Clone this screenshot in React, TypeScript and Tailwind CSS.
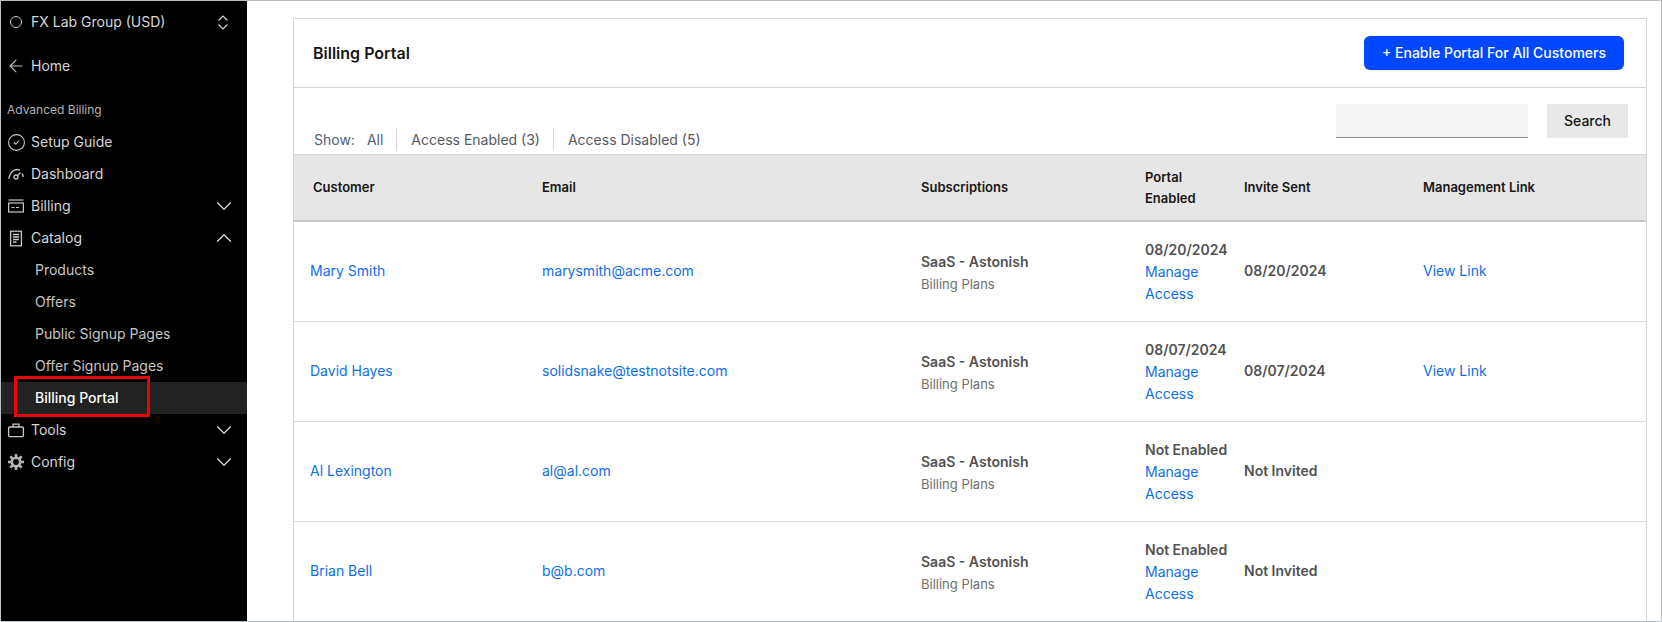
import { ArrowLeft, ChevronDown, ChevronUp, CircleCheck } from "lucide-react"
import type { ReactNode } from "react"

const font = "font-['Inter','Liberation_Sans',sans-serif]"

function ChevronsIcon() {
  return (
    <svg width="16" height="15" viewBox="0 0 16 15" fill="none" stroke="currentColor" strokeWidth="1.2">
      <path d="M3.500 5.500 8 1l4.500 4.500" />
      <path d="M3.500 9.500 8 14l4.500-4.500" />
    </svg>
  )
}

function GaugeIcon() {
  return (
    <svg width="18" height="16" viewBox="0 0 18 16" fill="none" stroke="currentColor" strokeWidth="1.3">
      <path d="M1.700 13C2.500 7.500 6 3.500 10 3.500c1 0 2 .2 3 .7" />
      <circle cx="9" cy="11" r="2" />
      <path d="m10.500 9.500 3-3" />
      <path d="M15 7.500c.6.8 1 2 1.300 3.500" />
    </svg>
  )
}

function BillingIcon() {
  return (
    <svg width="18" height="16" viewBox="0 0 18 16" fill="none" stroke="currentColor" strokeWidth="1.2">
      <path d="M1.500 2h15" />
      <rect x="1.600" y="5" width="14.800" height="9" />
      <path d="M4.500 9.500h3M9 9.500h3" />
    </svg>
  )
}

function CatalogIcon() {
  return (
    <svg width="14" height="17" viewBox="0 0 14 17" fill="none" stroke="currentColor" strokeWidth="1.3">
      <rect x="1.600" y="1.200" width="10.800" height="14.600" />
      <path d="M4 4.500h6M4 7h6M4 9.500h6M4 12h3.500" />
    </svg>
  )
}

function ToolsIcon() {
  return (
    <svg width="18" height="16" viewBox="0 0 18 16" fill="none" stroke="currentColor" strokeWidth="1.3">
      <rect x="1.600" y="5" width="14.800" height="9.600" rx="1" />
      <path d="M6 5V2.200h6V5" />
    </svg>
  )
}

function GearIcon() {
  return (
    <svg width="18" height="18" viewBox="0 0 18 18" fill="none" stroke="#b4b4b4">
      <circle cx="9" cy="9" r="4.200" strokeWidth="2.600" />
      <path
        d="M9 1v3M9 14v3M1 9h3M14 9h3M3.300 3.300l2.200 2.200M12.500 12.500l2.200 2.200M14.700 3.300l-2.200 2.200M5.500 12.500l-2.200 2.200"
        strokeWidth="2.600"
      />
    </svg>
  )
}

function NavRow({ icon, label, chevron }: { icon: ReactNode; label: string; chevron?: "up" | "down" }) {
  return (
    <div className="flex h-8 items-center pr-[10px] text-sm text-[#d6d6d6]">
      <span className="flex w-[30px] shrink-0 items-center justify-center text-[#c6c6c6]">{icon}</span>
      <span>{label}</span>
      {chevron === "down" && <ChevronDown className="ml-auto h-[26px] w-[26px]" strokeWidth={1.2} />}
      {chevron === "up" && <ChevronUp className="ml-auto h-[26px] w-[26px]" strokeWidth={1.2} />}
    </div>
  )
}

function SubRow({ label, active }: { label: string; active?: boolean }) {
  return (
    <div
      className={`flex h-8 items-center pl-[34px] text-sm ${active ? "bg-[#222222] font-medium text-white" : "text-[#c6c6c6]"}`}
    >
      {label}
    </div>
  )
}

function Sidebar() {
  return (
    <aside className="relative w-[246px] shrink-0 bg-black">
      <div className="flex h-[42px] items-center pr-4 text-sm text-[#d6d6d6]">
        <span className="flex w-[30px] shrink-0 justify-center">
          <span className="h-[12px] w-[12px] rounded-full border border-[#c6c6c6]" />
        </span>
        <span>FX Lab Group (USD)</span>
        <span className="ml-auto">
          <ChevronsIcon />
        </span>
      </div>
      <div className="mt-[7px] flex h-8 items-center text-sm text-[#d6d6d6]">
        <span className="flex w-[30px] shrink-0 justify-center text-[#c6c6c6]">
          <ArrowLeft className="h-5 w-5" strokeWidth={1.3} />
        </span>
        <span>Home</span>
      </div>
      <div className="mt-3 flex h-8 items-center pl-[6px] text-xs text-[#b4b4b4]">Advanced Billing</div>
      <NavRow icon={<CircleCheck className="h-[19px] w-[19px]" strokeWidth={1.4} />} label="Setup Guide" />
      <NavRow icon={<GaugeIcon />} label="Dashboard" />
      <NavRow icon={<BillingIcon />} label="Billing" chevron="down" />
      <NavRow icon={<CatalogIcon />} label="Catalog" chevron="up" />
      <SubRow label="Products" />
      <SubRow label="Offers" />
      <SubRow label="Public Signup Pages" />
      <SubRow label="Offer Signup Pages" />
      <SubRow label="Billing Portal" active />
      <NavRow icon={<ToolsIcon />} label="Tools" chevron="down" />
      <NavRow icon={<GearIcon />} label="Config" chevron="down" />
      <div className="absolute left-[13px] top-[375px] h-[41px] w-[136px] border-[3px] border-[#f00000]" />
    </aside>
  )
}

const cols = "grid grid-cols-[232px_379px_224px_99px_179px_1fr]"

type Customer = {
  name: string
  email: string
  enabled: string
  invite: string
  link?: boolean
}

const customers: Customer[] = [
  { name: "Mary Smith", email: "marysmith@acme.com", enabled: "08/20/2024", invite: "08/20/2024", link: true },
  { name: "David Hayes", email: "solidsnake@testnotsite.com", enabled: "08/07/2024", invite: "08/07/2024", link: true },
  { name: "Al Lexington", email: "al@al.com", enabled: "Not Enabled", invite: "Not Invited" },
  { name: "Brian Bell", email: "b@b.com", enabled: "Not Enabled", invite: "Not Invited" },
]

function CustomerRow({ c }: { c: Customer }) {
  return (
    <div className={`${cols} h-[100px] items-center border-b border-[#dcdcdc] text-sm`}>
      <a className="pb-[1px] pl-4 text-[#0f6fe6]">{c.name}</a>
      <a className="pb-[1px] pl-4 text-[#0f6fe6]">{c.email}</a>
      <div className="pl-4 pt-[3px]">
        <div className="font-semibold leading-[22px] text-[#525252]">SaaS - Astonish</div>
        <div className="text-[13px] leading-[22px] text-[#6f6f6f]">Billing Plans</div>
      </div>
      <div className="pl-4 leading-[22px]">
        <div className="font-semibold whitespace-nowrap text-[#525252]">{c.enabled}</div>
        <a className="block text-[#0f6fe6]">
          Manage
          <br />
          Access
        </a>
      </div>
      <div className="pb-[1px] pl-4 font-semibold text-[#525252]">{c.invite}</div>
      <div className="pb-[1px] pl-4">{c.link && <a className="text-[#0f6fe6]">View Link</a>}</div>
    </div>
  )
}

export default function App() {
  return (
    <div className={`${font} flex h-[622px] w-[1662px] overflow-hidden border border-[#b9c0c5] bg-white`}>
      <Sidebar />
      <main className="flex-1 pl-[46px] pr-[14px] pt-[17px]">
        <div className="h-full overflow-hidden border-x border-t border-[#d6d6d6]">
          <div className="flex h-[69px] items-center justify-between border-b border-[#d6d6d6] pl-[19px] pr-[22px]">
            <h1 className="text-base font-semibold text-[#161616]">Billing Portal</h1>
            <button className="flex h-[34px] w-[260px] items-center justify-center rounded-md bg-[#0047ff] text-sm font-medium text-white">
              + Enable Portal For All Customers
            </button>
          </div>
          <div className="flex h-[67px] items-start justify-between border-b border-[#d6d6d6] pl-[20px] pr-[18px]">
            <div className="mt-[40px] flex h-[23px] items-center text-sm text-[#565a60]">
              <span className="mr-[12px] text-[#4f5f75]">Show:</span>
              <span className="border-r border-[#d6d6d6] pr-[13px] leading-[23px] text-[#4f5f75]">All</span>
              <span className="border-r border-[#d6d6d6] pl-[14px] pr-[13px] leading-[23px]">Access Enabled (3)</span>
              <span className="pl-[14px] leading-[23px]">Access Disabled (5)</span>
            </div>
            <div className="mt-[16px] flex items-center gap-[19px]">
              <input className="h-[34px] w-[192px] border-b border-[#8d8d8d] bg-[#f4f4f4]" />
              <button className="h-[34px] w-[81px] bg-[#e8e8e8] text-sm font-medium text-[#161616]">Search</button>
            </div>
          </div>
          <div className={`${cols} h-[67px] items-center border-b-2 border-[#c8c8c8] bg-[#e6e6e6] text-[13px] font-semibold leading-[21px] text-[#161616]`}>
            <div className="pl-[19px]">Customer</div>
            <div className="pl-4">Email</div>
            <div className="pl-4">Subscriptions</div>
            <div className="pl-4">
              Portal
              <br />
              Enabled
            </div>
            <div className="pl-4">Invite Sent</div>
            <div className="pl-4">Management Link</div>
          </div>
          {customers.map((c) => (
            <CustomerRow key={c.email} c={c} />
          ))}
        </div>
      </main>
    </div>
  )
}
